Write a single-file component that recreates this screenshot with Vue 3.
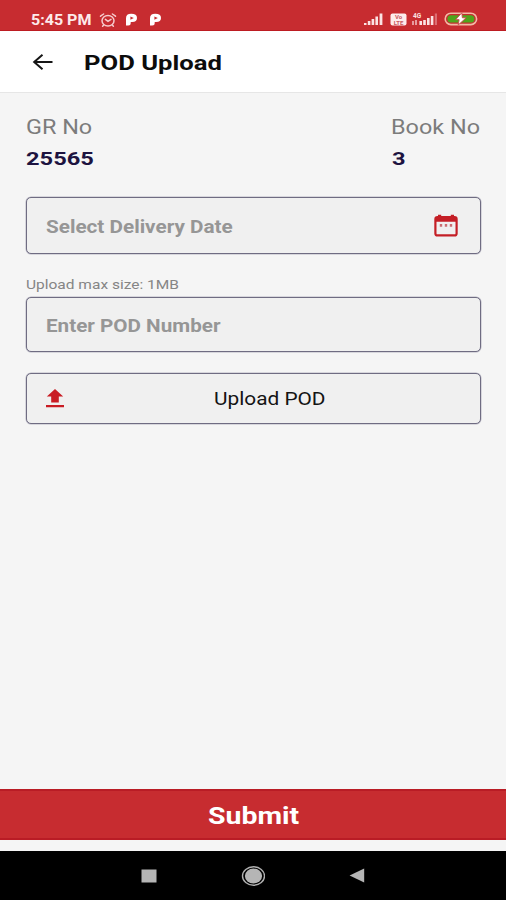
<template>
  <div class="screen">
    <div class="status-bar">
      <div class="status-left">
        <span class="time wide">5:45 PM</span>
        <svg class="alarm" width="18" height="16" viewBox="0 0 18 16">
          <g fill="none" stroke="#f6cccd" stroke-width="1.5" stroke-linecap="round">
            <ellipse cx="9" cy="8.8" rx="6" ry="5.3" />
            <path d="M1.5 4.2 4.6 2M16.5 4.2 13.4 2M6.4 7.4 9 9.4 12 7.4M4.4 13.4 3.6 14.2M13.6 13.4l.8.8" />
          </g>
        </svg>
        <svg v-for="n in 2" :key="n" class="p-icon" width="13" height="13" viewBox="0 0 13 13">
          <path
            fill="#fff"
            fill-rule="evenodd"
            d="M1 5.2Q1 .8 6.2.8 12 .8 12 4.9 12 9 7.2 9H5.7V10Q5.7 12.5 3.2 12.5H1ZM5.4 3.4V6.7L8.8 4.9Z"
          />
        </svg>
      </div>
      <div class="status-right">
        <svg width="21" height="12" viewBox="0 0 21 12">
          <path fill="#fbe3e3" d="M0 10h2.5v2H0zM3.8 8h2.6v4H3.8zM7.6 6h2.6v6H7.6zM11.4 3.5H14V12h-2.6zM15.6.5h2.8V12h-2.8z" />
        </svg>
        <svg width="17" height="13" viewBox="0 0 17 13">
          <rect x=".5" y=".5" width="16" height="12" rx="2" fill="#fdecec" />
          <text x="8.5" y="6.3" text-anchor="middle" class="volte">Vo</text>
          <text x="8.5" y="11.6" text-anchor="middle" class="volte">LTE</text>
        </svg>
        <svg class="signal-4g" width="27" height="14" viewBox="0 0 27 14">
          <text x="1" y="5.5" class="four-g">4G</text>
          <path fill="#e79a9d" d="M0 9h2v4H0zM3 8h2v5H3z" />
          <path fill="#fbe3e3" d="M7.4 9H10v4H7.4zM11.2 8h2.6v5h-2.6zM15 6h2.6v7H15zM18.8 4h2.6v9h-2.6z" />
          <path fill="#dc6e72" d="M22.8 1.5H25V13h-2.2z" />
        </svg>
        <svg width="34" height="14" viewBox="0 0 34 14">
          <rect x="1.2" y="1.2" width="31.4" height="11.4" rx="5.7" fill="#c72c30" stroke="#f3b9a5" stroke-width="1.6" />
          <rect x="3.4" y="3.2" width="27" height="7.4" rx="3.7" fill="#4fa51c" />
          <path d="M17.8.8 11.6 7.7h3.5L14.2 13l8-7.2h-3.8z" fill="#fff" stroke="#c9484a" stroke-width=".9" />
        </svg>
      </div>
    </div>

    <header class="header">
      <svg class="back" width="22" height="18" viewBox="0 0 22 18">
        <path d="M10.5 1.8 2.2 9l8.3 7.2M2.2 9H20.5" fill="none" stroke="#161616" stroke-width="2" />
      </svg>
      <h1 class="title wide">POD Upload</h1>
    </header>

    <main class="content">
      <div class="info">
        <div v-for="item in info" :key="item.label" class="info-item">
          <span class="label wide">{{ item.label }}</span>
          <span class="value wide">{{ item.value }}</span>
        </div>
      </div>

      <div class="field date-field">
        <span class="placeholder date-text wide">Select Delivery Date</span>
        <svg width="24" height="23" viewBox="0 0 24 23">
          <rect x="1.4" y="3" width="21.2" height="18.4" rx="2" fill="none" stroke="#c41f26" stroke-width="2.2" />
          <path d="M1 3.5h22v4.2H1zM4 .8h3.2V4H4zM16.8.8H20V4h-3.2z" fill="#c41f26" />
          <path d="M5.8 10h2.4v2.8H5.8zM10.8 10h2.4v2.8h-2.4zM15.8 10h2.4v2.8h-2.4z" fill="#cc6d72" />
        </svg>
      </div>

      <p class="hint wide">Upload max size: 1MB</p>
      <div class="field pod-field">
        <span class="placeholder pod-text wide">Enter POD Number</span>
      </div>

      <button class="field upload" type="button">
        <svg width="18" height="19" viewBox="0 0 18 19">
          <path d="M9 0 17.2 7.6h-4.4v6H5.2v-6H.8ZM0 16h18v2.2H0z" fill="#c91c24" />
        </svg>
        <span class="upload-text wide">Upload POD</span>
      </button>
    </main>

    <button class="submit" type="button"><span class="submit-text wide">Submit</span></button>

    <nav class="nav-bar">
      <svg width="16" height="14" viewBox="0 0 16 14">
        <rect x=".5" y=".5" width="15" height="13" fill="#b5b5b5" />
      </svg>
      <svg width="24" height="20" viewBox="0 0 24 20">
        <ellipse cx="12.5" cy="10" rx="11" ry="9.2" fill="none" stroke="#b0b0b0" stroke-width="1.4" />
        <ellipse cx="12.5" cy="10" rx="8.6" ry="7.4" fill="#b5b5b5" />
      </svg>
      <svg width="16" height="15" viewBox="0 0 16 15">
        <path d="M15.2.4v14.2L.6 7.5z" fill="#b5b5b5" />
      </svg>
    </nav>
  </div>
</template>

<script setup>
const info = [
  { label: 'GR No', value: '25565' },
  { label: 'Book No', value: '3' },
]
</script>

<style>
body {
  margin: 0;
}
</style>

<style scoped>
.screen {
  display: flex;
  flex-direction: column;
  width: 506px;
  height: 900px;
  overflow: hidden;
  background: #f5f5f5;
  font-family: Roboto, sans-serif;
}

/* the interface uses a widened Roboto */
.wide {
  display: inline-block;
  white-space: nowrap;
  transform: scaleX(1.2);
  transform-origin: left center;
}

.status-bar {
  display: flex;
  justify-content: space-between;
  box-sizing: border-box;
  height: 31px;
  padding: 9px 28px 0 31px;
  background: #c72c30;
  border-bottom: 1px solid #bd1c22;
}
.status-left,
.status-right {
  display: flex;
  align-items: center;
  height: 20px;
}
.status-left {
  height: 21px;
}
.time {
  width: 68px;
  color: #fdeaea;
  font-size: 14px;
  font-weight: 700;
  transform: scaleX(1.145);
}
.p-icon {
  margin-left: 8px;
}
.p-icon + .p-icon {
  margin-left: 11px;
}
.status-right {
  gap: 5px;
}
.volte {
  fill: #c9585c;
  font-size: 6px;
  font-weight: 700;
}
.four-g {
  fill: #fbe3e3;
  font-size: 6.5px;
  font-weight: 700;
}

.header {
  display: flex;
  align-items: center;
  box-sizing: border-box;
  height: 62px;
  padding-left: 32px;
  background: #fff;
  border-bottom: 1px solid #e6e6e6;
}
.title {
  margin: 2px 0 0 30px;
  color: #0c0c0c;
  font-size: 21px;
  font-weight: 700;
  transform: scaleX(1.22);
}

.content {
  flex: 1;
  padding: 23px 25px 0 26px;
}
.info {
  display: flex;
  justify-content: space-between;
  height: 81px;
}
.info-item {
  display: flex;
  flex-direction: column;
  width: 90px;
}
.info-item:last-child .value {
  margin-left: 1px;
}
.label {
  height: 31px;
  color: #7c7c7c;
  font-size: 19.5px;
  line-height: 24px;
}
.value {
  color: #1d1340;
  font-size: 19px;
  font-weight: 700;
  line-height: 24px;
  transform: scaleX(1.245);
}

.field {
  display: flex;
  align-items: center;
  box-sizing: border-box;
  width: 455px;
  padding: 0 19px;
  background: #f0f0f0;
  border: 1px solid #6f6c82;
  border-radius: 5px;
  box-shadow: 0 0 0 0.5px #b9b8c4;
}
.placeholder {
  margin-top: 2px;
  color: #969696;
  font-size: 17.5px;
  font-weight: 700;
}
.date-text {
  transform: scaleX(1.183);
}
.pod-text {
  transform: scaleX(1.18);
}
.date-field {
  justify-content: space-between;
  height: 57px;
  padding-right: 22px;
}
.hint {
  display: block;
  margin: 23px 0 4px;
  color: #858585;
  font-size: 13px;
  line-height: 16px;
  transform: scaleX(1.192);
}
.pod-field {
  height: 55px;
}
.upload {
  height: 51px;
  margin-top: 21px;
  font-family: inherit;
}
.upload-text {
  margin: 1px 0 0 150px;
  color: #141414;
  font-size: 17.5px;
  transform: scaleX(1.19);
}

.submit {
  flex: none;
  height: 51px;
  margin-bottom: 11px;
  padding: 3px 0 0 208px;
  background: #c72c30;
  border: solid #b91c25;
  border-width: 2px 0;
  color: #fff;
  font-family: inherit;
  text-align: left;
}
.submit-text {
  font-size: 23px;
  font-weight: 700;
  transform: scaleX(1.235);
}

.nav-bar {
  display: flex;
  align-items: center;
  box-sizing: border-box;
  height: 49px;
  padding: 0 141px;
  justify-content: space-between;
  background: #000;
}
</style>
